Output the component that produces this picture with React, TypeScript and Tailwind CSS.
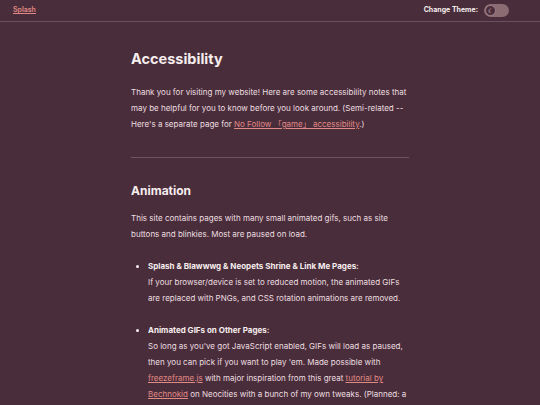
export default function App() {
  return (
    <div className="min-h-[405px] bg-[#4a2d3a] font-['Inter','Noto_Sans_CJK_JP',sans-serif] text-[#ecdfe0]">
      <header className="flex h-[22px] items-center justify-between border-b border-[#6b5060] pl-[13px] pr-[31px]">
        <a href="#" className="text-[7px] font-semibold text-[#e08a86] underline">
          Splash
        </a>
        <div className="flex items-center gap-[6px]">
          <span className="text-[7px] font-bold text-[#f4ecec]">Change Theme:</span>
          <div className="flex h-[13px] w-[25px] items-center rounded-full bg-[#8b6c73] px-[1px]">
            <div className="flex h-[11px] w-[11px] items-center justify-center rounded-full border border-[#a08088] bg-[#4a2d3a] text-[6px] leading-none text-[#e9dfe0]">
              ☾
            </div>
          </div>
        </div>
      </header>

      <main className="mx-auto w-[278px] pt-[27px] text-[8px] leading-[16px]">
        <h1 className="text-[14.5px] font-bold leading-[20px] text-[#f6eeee]">Accessibility</h1>
        <p className="mt-[15px]">
          Thank you for visiting my website! Here are some accessibility notes that may be
          helpful for you to know before you look around. (Semi-related -- Here's a separate
          page for{' '}
          <a href="#" className="text-[#e08a86] underline">
            No Follow 「game」 accessibility
          </a>
          .)
        </p>

        <hr className="mt-[25px] border-[#6e5462]" />

        <h2 className="mt-[24px] text-[12px] font-bold leading-[18px] text-[#f6eeee]">Animation</h2>
        <p className="mt-[10px]">
          This site contains pages with many small animated gifs, such as site buttons and
          blinkies. Most are paused on load.
        </p>

        <ul className="mt-[16px] list-disc pl-[17px] marker:text-[#f6eeee]">
          <li>
            <strong className="font-bold text-[#f6eeee]">
              Splash &amp; Blawwwg &amp; Neopets Shrine &amp; Link Me Pages:
            </strong>
            <br />
            If your browser/device is set to reduced motion, the animated GIFs are replaced
            with PNGs, and CSS rotation animations are removed.
          </li>
          <li className="mt-[16px]">
            <strong className="font-bold text-[#f6eeee]">Animated GIFs on Other Pages:</strong>
            <br />
            So long as you've got JavaScript enabled, GIFs will load as paused, then you can
            pick if you want to play 'em. Made possible with{' '}
            <a href="#" className="text-[#e08a86] underline">
              freezeframe.js
            </a>{' '}
            with major inspiration from this great{' '}
            <a href="#" className="text-[#e08a86] underline">
              tutorial by Bechnokid
            </a>{' '}
            on Neocities with a bunch of my own tweaks. (Planned: a toggle to pause all GIFs
            on every page at once.)
          </li>
        </ul>
      </main>
    </div>
  );
}
